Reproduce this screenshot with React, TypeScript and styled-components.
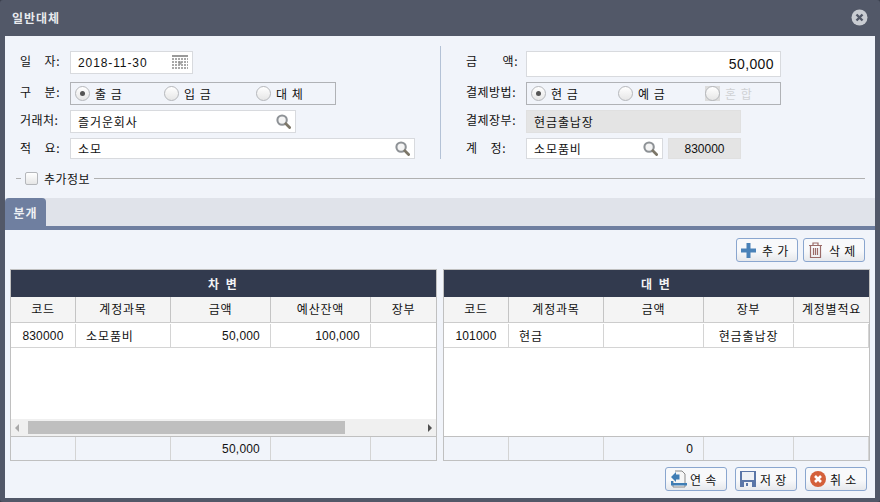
import React from "react";
import styled, { createGlobalStyle } from "styled-components";

const GlobalStyle = createGlobalStyle`
  html, body {
    margin: 0;
    padding: 0;
    background: #3a3f4c;
  }
  * {
    box-sizing: border-box;
  }
`;

const Window = styled.div`
  width: 880px;
  height: 502px;
  display: flex;
  flex-direction: column;
  padding: 0 5px 4px;
  background: #525868;
  border-radius: 3px;
  overflow: hidden;
  font-family: "Noto Sans CJK KR", "Liberation Sans", sans-serif;
  font-size: 12px;
  color: #111;
`;

const TitleBar = styled.div`
  height: 36px;
  flex: none;
  display: flex;
  align-items: center;
  justify-content: space-between;
  padding: 0 7px 2px 7px;
  color: #e8eaee;
  font-weight: 700;
  font-size: 12px;
  letter-spacing: 1px;
`;

const Body = styled.div`
  flex: 1;
  display: flex;
  flex-direction: column;
  background: #f1f4fa;
`;

const Form = styled.div`
  height: 124px;
  flex: none;
  display: grid;
  grid-template-columns: 435px 1fr;
  padding-top: 10px;
`;

const LeftColumn = styled.div`
  display: grid;
  grid-template-rows: 31px 28px 28px auto;
  padding: 5px 0 0 15px;
`;

const RightColumn = styled.div`
  display: grid;
  grid-template-rows: 31px 28px 28px auto;
  padding: 5px 0 0 25px;
  border-left: 1px solid #b4c2d6;
  height: 113px;
`;

const Row = styled.div`
  display: flex;
  align-items: flex-start;
`;

const LabelCell = styled.div<{ $col: number }>`
  width: ${({ $col }) => $col}px;
  flex: none;
  padding-top: 1px;
`;

const LabelText = styled.div<{ $w: number }>`
  width: ${({ $w }) => $w}px;
  line-height: 18px;
  letter-spacing: 0.5px;
  text-align: justify;
  text-align-last: justify;
`;

const Input = styled.div<{ $w: number; $h?: number; $big?: boolean; $disabled?: boolean }>`
  width: ${({ $w }) => $w}px;
  height: ${({ $h }) => $h ?? 23}px;
  display: flex;
  align-items: center;
  justify-content: space-between;
  padding: 0 4px 0 7px;
  background: ${({ $disabled }) => ($disabled ? "#e4e4e4" : "#fff")};
  border: 1px solid ${({ $disabled }) => ($disabled ? "#e0e0e0" : "#d8dade")};
  font-family: ${({ $big }) => ($big ? '"Liberation Sans", sans-serif' : "inherit")};
  font-size: ${({ $big }) => ($big ? "14px" : "12px")};
  letter-spacing: ${({ $big }) => ($big ? "0.4px" : "0.9px")};
`;

const DateText = styled.span`
  font-family: "Liberation Sans", sans-serif;
  letter-spacing: 0.9px;
`;

const AmountText = styled.span`
  margin-left: auto;
  margin-right: 2px;
`;

const CodeBox = styled.div`
  width: 73px;
  height: 21px;
  margin-left: 5px;
  display: flex;
  align-items: center;
  justify-content: center;
  background: #e4e4e4;
  border: 1px solid #e0e0e0;
  font-family: "Liberation Sans", sans-serif;
`;

const RadioGroup = styled.div<{ $w: number; $first: number; $second: number }>`
  width: ${({ $w }) => $w}px;
  height: 23px;
  display: grid;
  grid-template-columns: ${({ $first, $second }) => `${$first}px ${$second}px 1fr`};
  align-items: center;
  padding-left: 4px;
  border: 1px solid #b0b2b6;
`;

const RadioItem = styled.label<{ $disabled?: boolean }>`
  display: flex;
  align-items: center;
  gap: 5px;
  letter-spacing: 1px;
  color: ${({ $disabled }) => ($disabled ? "#cfd1d4" : "#111")};
`;

const RadioBack = styled.span`
  display: flex;
  background: #dcdcdc;
`;

const RadioCircle = styled.span<{ $checked?: boolean }>`
  width: 15px;
  height: 15px;
  flex: none;
  display: flex;
  align-items: center;
  justify-content: center;
  border: 1px solid #b5b7bb;
  border-radius: 50%;
  background: linear-gradient(#ffffff, #e6e6e6);
  &::after {
    content: "";
    display: ${({ $checked }) => ($checked ? "block" : "none")};
    width: 5px;
    height: 5px;
    border-radius: 50%;
    background: #555;
  }
`;

const InfoBar = styled.div`
  height: 38px;
  flex: none;
  display: flex;
  align-items: center;
  padding: 0 10px 2px 11px;
`;

const InfoLine = styled.div<{ $short?: boolean }>`
  height: 1px;
  background: #b0b0b0;
  flex: ${({ $short }) => ($short ? "none" : "1")};
  width: ${({ $short }) => ($short ? "5px" : "auto")};
`;

const CheckBox = styled.span`
  width: 13px;
  height: 13px;
  margin: 0 6px 0 4px;
  border: 1px solid #b5b7bb;
  border-radius: 2px;
  background: linear-gradient(#ffffff, #e6e6e6);
`;

const InfoText = styled.span`
  margin-right: 4px;
  letter-spacing: 0.5px;
`;

const TabStrip = styled.div`
  height: 32px;
  flex: none;
  background: #e0e3ea;
  border-bottom: 4px solid #6f7fa0;
`;

const Tab = styled.div`
  width: 41px;
  height: 28px;
  display: flex;
  align-items: center;
  justify-content: center;
  background: #6f7fa0;
  border-radius: 4px 4px 0 0;
  color: #eef0f4;
  font-weight: 700;
  letter-spacing: 1px;
`;

const Content = styled.div`
  flex: 1;
  display: flex;
  flex-direction: column;
  padding: 8px 5px 0;
`;

const Toolbar = styled.div<{ $gap: number; $pad: number }>`
  display: flex;
  justify-content: flex-end;
  gap: ${({ $gap }) => $gap}px;
  padding-right: ${({ $pad }) => $pad}px;
`;

const Button = styled.button<{ $gap?: number }>`
  width: 62px;
  height: 24px;
  padding: 0 0 0 4px;
  display: flex;
  align-items: center;
  gap: ${({ $gap }) => $gap ?? 6}px;
  border: 1px solid #8aa6cf;
  border-radius: 3px;
  background: linear-gradient(#f8f9fb 55%, #e6e8ec);
  font-family: inherit;
  font-size: 12px;
  letter-spacing: 0.8px;
  color: #111;
  white-space: nowrap;
`;

const Tables = styled.div`
  display: grid;
  grid-template-columns: 427px 427px;
  gap: 6px;
  margin: 7px 0 6px;
`;

const Panel = styled.div`
  height: 192px;
  display: flex;
  flex-direction: column;
  border: 1px solid #c0c0c0;
  background: #fff;
`;

const PanelTitle = styled.div`
  height: 27px;
  flex: none;
  display: flex;
  align-items: center;
  justify-content: center;
  background: #323a4e;
  color: #f2f3f5;
  font-weight: 700;
  letter-spacing: 2px;
`;

const GridRow = styled.div<{ $cols: string; $h: number; $bg: string; $line: string }>`
  height: ${({ $h }) => $h}px;
  flex: none;
  display: grid;
  grid-template-columns: ${({ $cols }) => $cols};
  background: ${({ $bg }) => $bg};
  border-bottom: 1px solid ${({ $line }) => $line};
`;

const HeadCell = styled.div`
  display: flex;
  align-items: center;
  justify-content: center;
  padding-bottom: 2px;
  border-right: 1px solid #c4c4c4;
  letter-spacing: 0.8px;
  &:last-child {
    border-right: 0;
  }
`;

const DataCell = styled.div<{ $align?: string; $pad?: number; $num?: boolean; $edge?: boolean }>`
  display: flex;
  align-items: center;
  justify-content: ${({ $align }) => $align ?? "flex-start"};
  margin-top: 1px;
  padding: 0 ${({ $pad }) => $pad ?? 0}px;
  border-right: 1px solid #d4d4d4;
  font-family: ${({ $num }) => ($num ? '"Liberation Sans", sans-serif' : "inherit")};
  letter-spacing: ${({ $num }) => ($num ? "0.2px" : "0.9px")};
  &:last-child {
    border-right: ${({ $edge }) => ($edge ? "1px solid #d4d4d4" : "0")};
  }
`;

const BlankArea = styled.div`
  flex: 1;
`;

const ScrollBar = styled.div`
  height: 17px;
  flex: none;
  display: flex;
  align-items: center;
  justify-content: space-between;
  padding: 0 4px;
  background: #f0f0f0;
`;

const ScrollThumb = styled.div`
  position: absolute;
  top: 2px;
  left: 17px;
  width: 317px;
  height: 13px;
  background: #bfbfbf;
`;

const ScrollTrack = styled.div`
  position: relative;
  height: 17px;
`;

const Arrow = styled.span<{ $dir: "left" | "right"; $light?: boolean }>`
  width: 0;
  height: 0;
  border-top: 4px solid transparent;
  border-bottom: 4px solid transparent;
  ${({ $dir, $light }) =>
    $dir === "left"
      ? `border-right: 4px solid ${$light ? "#a8a8a8" : "#505050"};`
      : `border-left: 4px solid ${$light ? "#a8a8a8" : "#505050"};`}
`;

const FootCell = styled.div<{ $edge?: boolean }>`
  display: flex;
  align-items: center;
  justify-content: flex-end;
  padding: 0 10px;
  border-right: 1px solid #d4d4d4;
  font-family: "Liberation Sans", sans-serif;
  letter-spacing: 0.2px;
  &:last-child {
    border-right: ${({ $edge }) => ($edge ? "1px solid #d4d4d4" : "0")};
  }
`;

const FootRow = styled.div<{ $cols: string }>`
  flex: none;
  height: 24px;
  display: grid;
  grid-template-columns: ${({ $cols }) => $cols};
  background: #f1f4fa;
  border-top: 1px solid #c0c0c0;
`;

const SearchIcon = () => (
  <svg width="15" height="15" viewBox="0 0 16 16">
    <circle cx="6.5" cy="6.5" r="5" fill="#f4f4f4" stroke="#8e9296" strokeWidth="2.2" />
    <path d="M10.5 10.5 L14.5 14.5" stroke="#7c7668" strokeWidth="3" strokeLinecap="round" />
  </svg>
);

const CalendarIcon = () => (
  <svg width="16" height="15" viewBox="0 0 16 15">
    <rect x="0" y="0" width="16" height="2" fill="#9a9a9a" />
    <path
      d="M0 4H16M0 7H16M0 10H16M0 13H16"
      stroke="#a8a8a8"
      strokeWidth="2"
      strokeDasharray="2 1"
    />
    <path d="M8 6V10M6 8H10" stroke="#8a8a8a" strokeWidth="1" />
  </svg>
);

const CloseIcon = () => (
  <svg width="17" height="17" viewBox="0 0 17 17">
    <circle cx="8.5" cy="8.5" r="8" fill="#c9ccd2" />
    <path d="M5.5 5.5 L11.5 11.5 M11.5 5.5 L5.5 11.5" stroke="#525868" strokeWidth="2.4" />
  </svg>
);

const PlusIcon = () => (
  <svg width="15" height="15" viewBox="0 0 15 15">
    <path d="M5.5 0H9.5V5.5H15V9.5H9.5V15H5.5V9.5H0V5.5H5.5Z" fill="#4a82b8" />
  </svg>
);

const TrashIcon = () => (
  <svg width="15" height="16" viewBox="0 0 15 16" fill="none" stroke="#9a6b68" strokeWidth="1.2">
    <path d="M1 3.5H14M5 3V1H10V3" />
    <path d="M2.5 4V15.5H12.5V4" />
    <path d="M5.5 6V13M7.5 6V13M9.5 6V13" />
  </svg>
);

const ContinueIcon = () => (
  <svg width="18" height="18" viewBox="0 0 18 18">
    <path d="M5 1H12L15 4V17H3V11" fill="#f6f6f6" stroke="#8a8a8a" />
    <path d="M1 7L6 2V4.5H9.5V9.5H6V12Z" fill="#3f7db5" />
    <path d="M1 11H3V13H17V15.5H1Z" fill="#3f7db5" />
  </svg>
);

const SaveIcon = () => (
  <svg width="16" height="16" viewBox="0 0 16 16">
    <rect x="0" y="0" width="16" height="16" fill="#5a76a8" />
    <rect x="2" y="1" width="12" height="8" fill="#eef1f6" />
    <rect x="4" y="11" width="8" height="5" fill="#eef1f6" />
    <rect x="6" y="12" width="2" height="3" fill="#5a76a8" />
  </svg>
);

const CancelIcon = () => (
  <svg width="16" height="16" viewBox="0 0 16 16">
    <circle cx="8" cy="8" r="8" fill="#d4603a" />
    <path d="M5 5 L11 11 M11 5 L5 11" stroke="#fff" strokeWidth="2.6" />
  </svg>
);

const leftCols = "65px 95px 100px 100px 1fr";
const rightCols = "65px 95px 100px 90px 1fr";

const App: React.FC = () => {
  return (
    <>
      <GlobalStyle />
      <Window>
        <TitleBar>
          일반대체
          <CloseIcon />
        </TitleBar>
        <Body>
          <Form>
            <LeftColumn>
              <Row>
                <LabelCell $col={50}><LabelText $w={40}>일 자:</LabelText></LabelCell>
                <Input $w={123}>
                  <DateText>2018-11-30</DateText>
                  <CalendarIcon />
                </Input>
              </Row>
              <Row>
                <LabelCell $col={50}><LabelText $w={40}>구 분:</LabelText></LabelCell>
                <RadioGroup $w={266} $first={89} $second={92}>
                  <RadioItem><RadioCircle $checked />출 금</RadioItem>
                  <RadioItem><RadioCircle />입 금</RadioItem>
                  <RadioItem><RadioCircle />대 체</RadioItem>
                </RadioGroup>
              </Row>
              <Row>
                <LabelCell $col={50}><LabelText $w={40}>거래처:</LabelText></LabelCell>
                <Input $w={226}>
                  즐거운회사
                  <SearchIcon />
                </Input>
              </Row>
              <Row>
                <LabelCell $col={50}><LabelText $w={40}>적 요:</LabelText></LabelCell>
                <Input $w={345} $h={21}>
                  소모
                  <SearchIcon />
                </Input>
              </Row>
            </LeftColumn>
            <RightColumn>
              <Row>
                <LabelCell $col={60}><LabelText $w={52}>금 액:</LabelText></LabelCell>
                <Input $w={255} $h={26} $big>
                  <AmountText>50,000</AmountText>
                </Input>
              </Row>
              <Row>
                <LabelCell $col={60}><LabelText $w={52}>결제방법:</LabelText></LabelCell>
                <RadioGroup $w={255} $first={87} $second={87}>
                  <RadioItem><RadioCircle $checked />현 금</RadioItem>
                  <RadioItem><RadioCircle />예 금</RadioItem>
                  <RadioItem $disabled><RadioBack><RadioCircle /></RadioBack>혼 합</RadioItem>
                </RadioGroup>
              </Row>
              <Row>
                <LabelCell $col={60}><LabelText $w={52}>결제장부:</LabelText></LabelCell>
                <Input $w={215} $disabled>현금출납장</Input>
              </Row>
              <Row>
                <LabelCell $col={60}><LabelText $w={40}>계 정:</LabelText></LabelCell>
                <Input $w={137} $h={21}>
                  소모품비
                  <SearchIcon />
                </Input>
                <CodeBox>830000</CodeBox>
              </Row>
            </RightColumn>
          </Form>
          <InfoBar>
            <InfoLine $short />
            <CheckBox />
            <InfoText>추가정보</InfoText>
            <InfoLine />
          </InfoBar>
          <TabStrip>
            <Tab>분개</Tab>
          </TabStrip>
          <Content>
            <Toolbar $gap={5} $pad={5}>
              <Button><PlusIcon />추 가</Button>
              <Button><TrashIcon />삭 제</Button>
            </Toolbar>
            <Tables>
              <Panel>
                <PanelTitle>차 변</PanelTitle>
                <GridRow $cols={leftCols} $h={26} $bg="#f4f4f4" $line="#ccc">
                  <HeadCell>코드</HeadCell>
                  <HeadCell>계정과목</HeadCell>
                  <HeadCell>금액</HeadCell>
                  <HeadCell>예산잔액</HeadCell>
                  <HeadCell>장부</HeadCell>
                </GridRow>
                <GridRow $cols={leftCols} $h={25} $bg="#fff" $line="#d4d4d4">
                  <DataCell $align="center" $num>830000</DataCell>
                  <DataCell $pad={10}>소모품비</DataCell>
                  <DataCell $align="flex-end" $pad={10} $num>50,000</DataCell>
                  <DataCell $align="flex-end" $pad={10} $num>100,000</DataCell>
                  <DataCell />
                </GridRow>
                <BlankArea />
                <ScrollTrack>
                  <ScrollBar>
                    <Arrow $dir="left" $light />
                    <Arrow $dir="right" />
                  </ScrollBar>
                  <ScrollThumb />
                </ScrollTrack>
                <FootRow $cols={leftCols}>
                  <FootCell />
                  <FootCell />
                  <FootCell>50,000</FootCell>
                  <FootCell />
                  <FootCell />
                </FootRow>
              </Panel>
              <Panel>
                <PanelTitle>대 변</PanelTitle>
                <GridRow $cols={rightCols} $h={26} $bg="#f4f4f4" $line="#ccc">
                  <HeadCell>코드</HeadCell>
                  <HeadCell>계정과목</HeadCell>
                  <HeadCell>금액</HeadCell>
                  <HeadCell>장부</HeadCell>
                  <HeadCell>계정별적요</HeadCell>
                </GridRow>
                <GridRow $cols={rightCols} $h={25} $bg="#fff" $line="#d4d4d4">
                  <DataCell $align="center" $num>101000</DataCell>
                  <DataCell $pad={10}>현금</DataCell>
                  <DataCell />
                  <DataCell $align="center">현금출납장</DataCell>
                  <DataCell $edge />
                </GridRow>
                <BlankArea />
                <FootRow $cols={rightCols}>
                  <FootCell />
                  <FootCell />
                  <FootCell>0</FootCell>
                  <FootCell />
                  <FootCell $edge />
                </FootRow>
              </Panel>
            </Tables>
            <Toolbar $gap={8} $pad={3}>
              <Button $gap={2}><ContinueIcon />연 속</Button>
              <Button $gap={4}><SaveIcon />저 장</Button>
              <Button $gap={4}><CancelIcon />취 소</Button>
            </Toolbar>
          </Content>
        </Body>
      </Window>
    </>
  );
};

export default App;
